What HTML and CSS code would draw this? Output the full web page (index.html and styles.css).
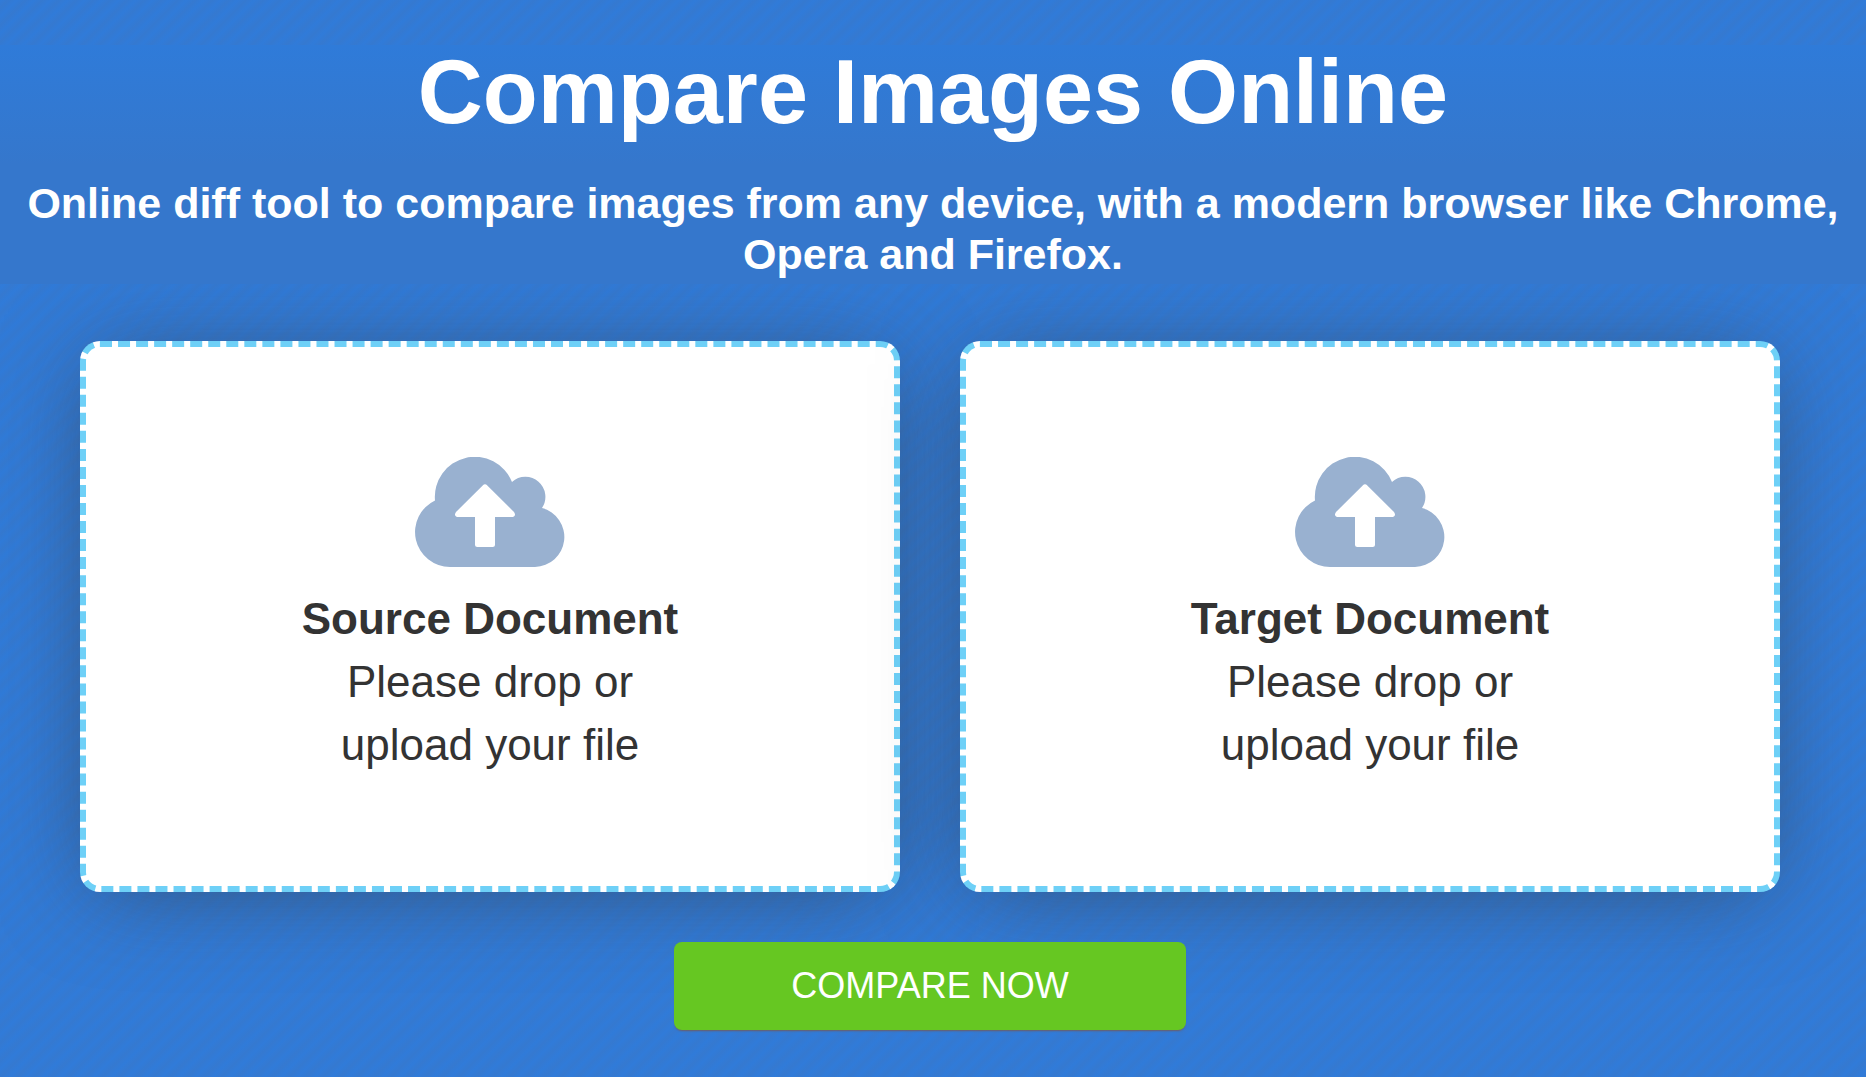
FILE: index.html
```html
<!DOCTYPE html>
<html lang="en">
<head>
<meta charset="utf-8">
<meta name="viewport" content="width=device-width, initial-scale=1">
<title>Compare Images Online</title>
<link rel="stylesheet" href="styles.css">
</head>
<body>
<header class="hero">
  <h1 class="hero-title">Compare Images Online</h1>
  <h2 class="hero-subtitle">Online diff tool to compare images from any device, with a modern browser like Chrome, Opera and Firefox.</h2>
</header>
<main>
  <form class="compare">
    <div class="drops">
      <button type="button" class="drop">
        <svg class="cloud" viewBox="0 0 150 110" aria-hidden="true">
          <path fill="#99b1d0" d="M35 110A35 35 0 0 1 20 43.400A40 40 0 0 1 97 25A20 20 0 0 1 127 51A30 30 0 0 1 120 110Z"/>
          <path fill="#fff" d="M67.700 28.500Q70 26.200 72.300 28.500L99 55Q101.500 59 98 60H80V87.500Q80 90 77.500 90H62.500Q60 90 60 87.500V60H42Q38.500 59 41 55Z"/>
        </svg>
        <strong class="drop-title">Source Document</strong>
        <span class="drop-text">Please drop or<br>upload your file</span>
      </button>
      <button type="button" class="drop">
        <svg class="cloud" viewBox="0 0 150 110" aria-hidden="true">
          <path fill="#99b1d0" d="M35 110A35 35 0 0 1 20 43.400A40 40 0 0 1 97 25A20 20 0 0 1 127 51A30 30 0 0 1 120 110Z"/>
          <path fill="#fff" d="M67.700 28.500Q70 26.200 72.300 28.500L99 55Q101.500 59 98 60H80V87.500Q80 90 77.500 90H62.500Q60 90 60 87.500V60H42Q38.500 59 41 55Z"/>
        </svg>
        <strong class="drop-title">Target Document</strong>
        <span class="drop-text">Please drop or<br>upload your file</span>
      </button>
    </div>
    <button type="submit" class="submit">COMPARE NOW</button>
  </form>
</main>
</body>
</html>
```
FILE: styles.css
```css
* { box-sizing: border-box; }

body {
  margin: 0;
  min-height: 100vh;
  padding-top: 45px;
  background: repeating-linear-gradient(135deg, #307bd9 0, #3579d0 6px, #307bd9 12px);
  color: #333;
  font-family: "Liberation Sans", Arial, sans-serif;
}

.hero {
  position: relative;
  z-index: 1;
  padding: 0 20px 4px;
  background: linear-gradient(#2f7bd9, #3577cc 50%, #3577cc);
  color: #fff;
  text-align: center;
}

.hero-title {
  margin: 0;
  font-size: 90px;
  line-height: 94px;
}

.hero-subtitle {
  margin: 0;
  padding-top: 39px;
  font-size: 43px;
  line-height: 51px;
}

.compare {
  display: flex;
  flex-direction: column;
  align-items: center;
  gap: 50px;
  padding: 57px 86px 47px 80px;
}

.drops {
  display: grid;
  grid-template-columns: 1fr 1fr;
  gap: 60px;
  width: 100%;
}

.drop {
  display: flex;
  flex-direction: column;
  align-items: center;
  padding: 110px 20px;
  border: 6px dashed #6ed0f7;
  border-radius: 20px;
  background: #fff;
  box-shadow: 0 8px 90px -15px rgba(51, 51, 51, 0.6);
  color: inherit;
  font: inherit;
  font-size: 44px;
  line-height: 63px;
  cursor: pointer;
}

.cloud {
  width: 150px;
  height: 110px;
  margin-bottom: 20px;
}

.submit {
  width: 512px;
  max-width: 100%;
  height: 88px;
  border: 0;
  border-radius: 8px;
  background: #66c722;
  box-shadow: 0 2px 2px -1px rgba(153, 70, 20, 0.6);
  color: #fff;
  font: inherit;
  font-size: 36px;
  cursor: pointer;
}
```
